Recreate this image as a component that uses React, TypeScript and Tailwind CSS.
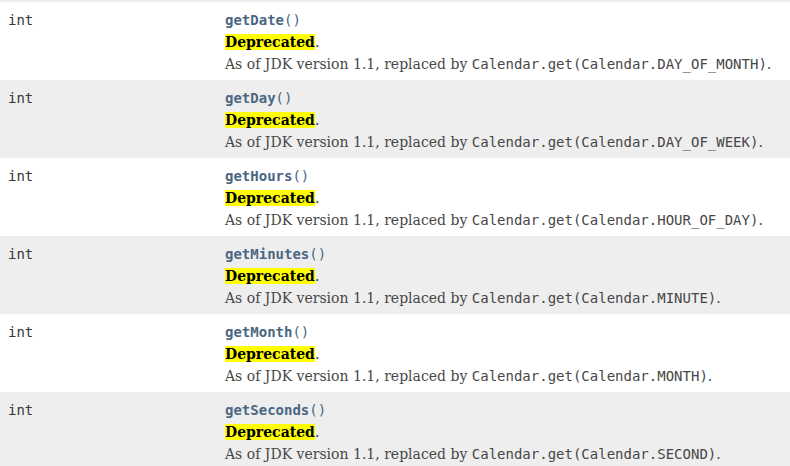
const rows = [
  { name: "getDate", field: "DAY_OF_MONTH" },
  { name: "getDay", field: "DAY_OF_WEEK" },
  { name: "getHours", field: "HOUR_OF_DAY" },
  { name: "getMinutes", field: "MINUTE" },
  { name: "getMonth", field: "MONTH" },
  { name: "getSeconds", field: "SECOND" },
];

const mono = "font-['DejaVu_Sans_Mono',monospace] text-[14px]";
const serif = "font-['DejaVu_Serif',serif] text-[14px]";

const App = () => {
  return (
    <div className="w-[790px] h-[466px] overflow-hidden bg-white">
      <div className="h-[2px] bg-[#eeeeef]" />
      {rows.map((row, i) => (
        <div
          key={row.name}
          className={`flex pt-[7px] pb-[5px] ${i % 2 === 0 ? "bg-white" : "bg-[#eeeeef]"}`}
        >
          <div className={`w-[225px] shrink-0 pl-[8px] h-[22px] leading-[22px] text-[#353833] ${mono}`}>
            int
          </div>
          <div className="flex flex-col">
            <div className={`h-[22px] leading-[22px] text-[#4a6782] ${mono}`}>
              <span className="font-bold">{row.name}</span>()
            </div>
            <div className={`h-[22px] leading-[22px] text-[#353833] ${serif}`}>
              <span className="bg-[#ffff00] font-bold text-black">Deprecated</span>.
            </div>
            <div className={`h-[22px] leading-[22px] text-[#474747] ${serif}`}>
              As of JDK version 1.1, replaced by{" "}
              <code className={`${mono} text-[#474747]`}>
                Calendar.get(Calendar.{row.field})
              </code>
              .
            </div>
          </div>
        </div>
      ))}
    </div>
  );
};

export default App;
